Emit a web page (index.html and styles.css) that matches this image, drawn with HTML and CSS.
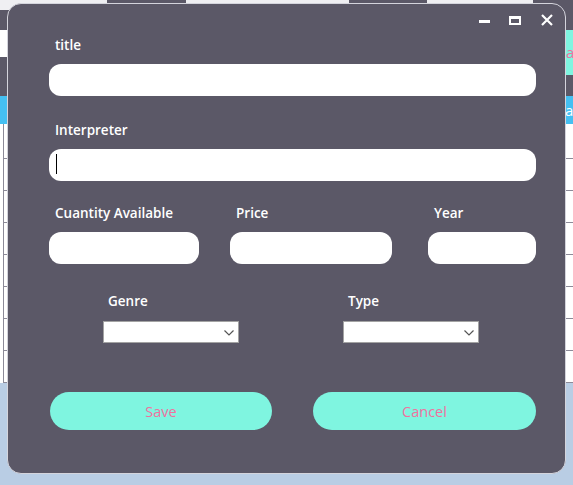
FILE: index.html
```html
<!DOCTYPE html>
<html>
<head>
  <meta charset="utf-8">
  <title>Discos</title>
  <link rel="stylesheet" href="styles.css">
</head>

<body>
  <!-- ventana principal (detrás del diálogo) -->
  <div class="app">
    <div class="toolbar">
      <div class="tb-side"></div>
      <div class="tb-btn tb-first">Nuevo</div>
      <div class="tb-btn tb-second">Editar</div>
      <div class="tb-end"></div>
    </div>
    <div class="tabs">
      <div class="tab">agregar</div>
    </div>
    <div class="strip"></div>
    <div class="thead">
      <span class="th-text">ai</span>
    </div>
    <div class="rows">
      <div class="row row-first"></div>
      <div class="row"></div>
      <div class="row"></div>
      <div class="row"></div>
      <div class="row"></div>
      <div class="row"></div>
      <div class="row"></div>
      <div class="row"></div>
    </div>
  </div>

  <!-- diálogo de alta de disco -->
  <div class="dialog">
    <div class="titlebar">
      <svg class="win-btn" width="12" height="12" viewBox="0 0 12 12">
        <rect x="0" y="6" width="11" height="3" fill="#fff"/>
      </svg>
      <svg class="win-btn" width="12" height="12" viewBox="0 0 12 12">
        <path d="M0 2h12v9H0z M2 5h8v4H2z" fill="#fff" fill-rule="evenodd"/>
      </svg>
      <svg class="win-btn" width="12" height="12" viewBox="0 0 12 12">
        <path d="M1 1L11 11M11 1L1 11" stroke="#fff" stroke-width="2.2" fill="none"/>
      </svg>
    </div>

    <form class="form">
      <div class="field">
        <label for="title">title</label>
        <input id="title" class="text-input" type="text">
      </div>

      <div class="field field-interp">
        <label for="interp">Interpreter</label>
        <div class="caret-wrap">
          <input id="interp" class="text-input" type="text">
        </div>
      </div>

      <div class="row3">
        <div class="field col-qty">
          <label for="qty">Cuantity Available</label>
          <input id="qty" class="text-input" type="text">
        </div>
        <div class="field col-price">
          <label for="price">Price</label>
          <input id="price" class="text-input" type="text">
        </div>
        <div class="field col-year">
          <label for="year">Year</label>
          <input id="year" class="text-input" type="text">
        </div>
      </div>

      <div class="selects">
        <div class="field">
          <label for="genre" class="sel-label">Genre</label>
          <div class="select-wrap">
            <select id="genre"></select>
            <svg class="chevron" width="10" height="6" viewBox="0 0 10 6">
              <path d="M0.5 0.5L5 5L9.5 0.5" stroke="#555" stroke-width="1.2" fill="none"/>
            </svg>
          </div>
        </div>
        <div class="field">
          <label for="type" class="sel-label">Type</label>
          <div class="select-wrap">
            <select id="type"></select>
            <svg class="chevron" width="10" height="6" viewBox="0 0 10 6">
              <path d="M0.5 0.5L5 5L9.5 0.5" stroke="#555" stroke-width="1.2" fill="none"/>
            </svg>
          </div>
        </div>
      </div>

      <div class="actions">
        <button type="button" class="btn btn-save">Save</button>
        <button type="button" class="btn btn-cancel">Cancel</button>
      </div>
    </form>
  </div>
</body>

</html>
```

FILE: styles.css
```css
body {
  margin: 0;
  background: #b9cde4;
  font-family: "Open Sans", "Noto Sans", sans-serif;
  width: 573px;
  height: 485px;
  overflow: hidden;
  position: relative;
}

/* ---- ventana de fondo ---- */

.app {
  height: 383px;
  background: #fff;
  display: flex;
  flex-direction: column;
}

.toolbar {
  height: 30px;
  background: #efeff2;
  display: flex;
  align-items: flex-start;
}

.tb-side {
  width: 12px;
  height: 20px;
  margin-top: 10px;
  background: #5b5867;
}

.tb-btn {
  height: 24px;
  background: #5b5867;
  color: #fff;
  font-size: 11px;
  text-align: center;
  line-height: 14px;
}

.tb-first {
  width: 79px;
  margin-left: 95px;
}

.tb-second {
  width: 78px;
  margin-left: 163px;
}

.tb-end {
  width: 40px;
  height: 30px;
  margin-left: auto;
  background: #5b5867;
}

.tabs {
  height: 45px;
  display: flex;
  justify-content: flex-end;
  background: linear-gradient(#fff 0 27px, #5b5867 27px);
}

.tab {
  width: 107px;
  background: #7ff5e0;
  color: #f0719f;
  font-size: 15px;
  line-height: 45px;
  padding-left: 100px;
  box-sizing: border-box;
  overflow: hidden;
}

.strip {
  height: 22px;
  background: #5b5867;
}

.thead {
  height: 28px;
  background: #45c0f2;
  color: #fff;
  font-size: 15px;
  display: flex;
  justify-content: flex-end;
}

.th-text {
  width: 8px;
  line-height: 28px;
  overflow: hidden;
}

.rows {
  flex: 1;
  border-left: 1px solid #8c8a98;
  margin-left: 3px;
}

.row {
  height: 31px;
  border-bottom: 1px solid #8c8a98;
}

.row-first {
  height: 34px;
}

/* ---- diálogo ---- */

.dialog {
  position: absolute;
  left: 7px;
  top: 3px;
  width: 559px;
  height: 471px;
  box-sizing: border-box;
  background: #5b5867;
  border: 1px solid #d4d4dc;
  border-radius: 14px;
}

.titlebar {
  height: 31px;
  box-sizing: border-box;
  padding: 10px 12px 0 0;
  display: flex;
  justify-content: flex-end;
  gap: 18px;
}

.titlebar .win-btn:last-child {
  margin-left: 2px;
}

.form {
  padding: 0 29px 0 41px;
}

.field label {
  display: block;
  color: #fff;
  font-size: 13.5px;
  font-weight: 600;
  line-height: 20px;
  padding-left: 6px;
  margin-bottom: 9px;
  white-space: nowrap;
}

.text-input {
  display: block;
  box-sizing: border-box;
  width: 100%;
  height: 32px;
  border: none;
  border-radius: 12px;
  background: #fff;
  margin: 0;
  padding: 0 7px;
  font-family: inherit;
  font-size: 14px;
}

.field-interp {
  margin-top: 24px;
}

/* cursor de texto en el campo activo */
.caret-wrap {
  position: relative;
}

.caret-wrap::after {
  content: "";
  position: absolute;
  left: 7px;
  top: 5px;
  width: 1px;
  height: 20px;
  background: #000;
}

.row3 {
  margin-top: 22px;
  display: flex;
}

.col-qty {
  width: 150px;
}

.col-price {
  width: 162px;
  margin-left: 31px;
}

.col-year {
  width: 108px;
  margin-left: auto;
}

.selects {
  margin-top: 27px;
  padding-left: 54px;
  display: grid;
  grid-template-columns: 136px 136px;
  column-gap: 104px;
}

.field .sel-label {
  padding-left: 5px;
  margin-bottom: 10px;
}

.select-wrap {
  position: relative;
  height: 22px;
}

.select-wrap select {
  appearance: none;
  -webkit-appearance: none;
  display: block;
  width: 100%;
  height: 22px;
  margin: 0;
  border: 1px solid #a3a3a3;
  border-radius: 0;
  background: #fff;
}

.chevron {
  position: absolute;
  right: 5px;
  top: 9px;
  pointer-events: none;
}

.actions {
  margin-top: 49px;
  padding-left: 1px;
  display: flex;
  gap: 41px;
}

.btn {
  height: 38px;
  border: none;
  border-radius: 19px;
  background: #7ff5e0;
  color: #f0719f;
  font-family: inherit;
  font-size: 14.5px;
  padding: 0;
  margin: 0;
}

.btn-save {
  width: 222px;
}

.btn-cancel {
  width: 223px;
}
```
